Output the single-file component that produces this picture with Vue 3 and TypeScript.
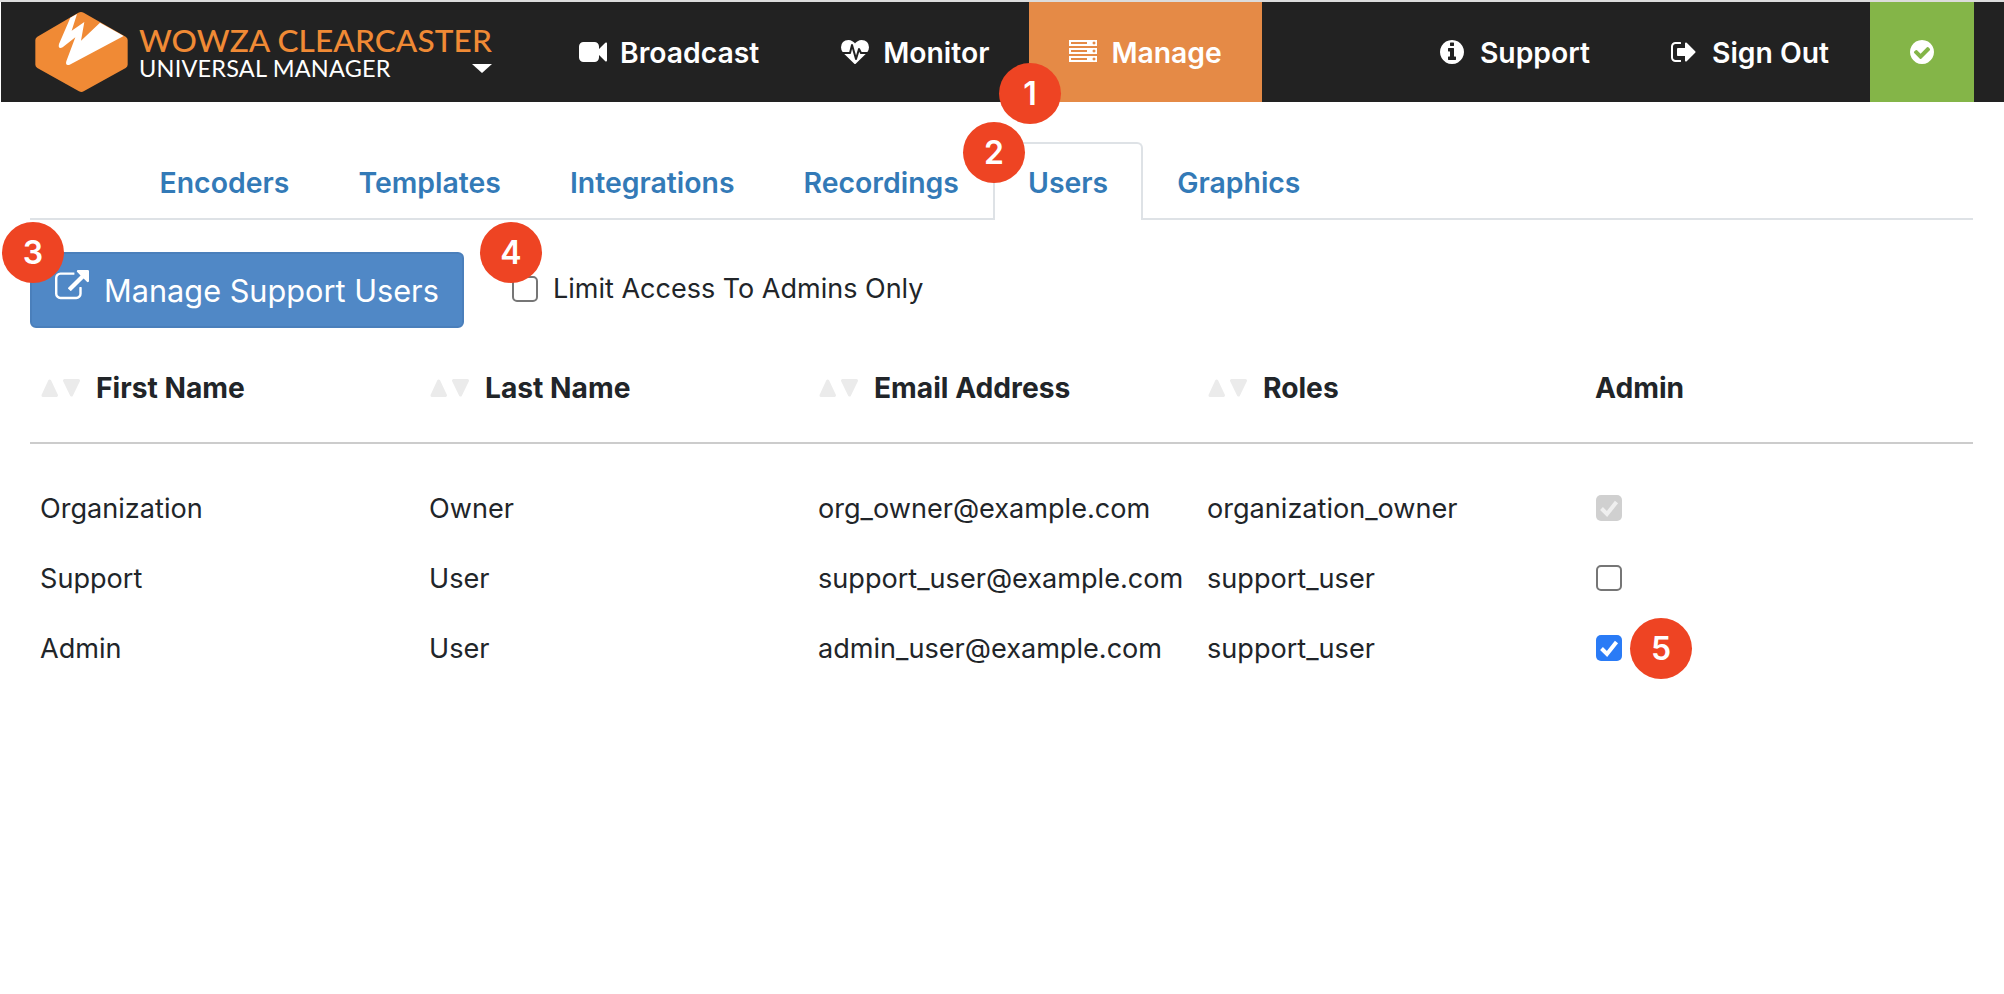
<script setup lang="ts">
interface Row { first: string; last: string; email: string; role: string; state: 'disabled' | 'off' | 'on' }
const tabs = ['Encoders', 'Templates', 'Integrations', 'Recordings', 'Users', 'Graphics']
const cols = ['First Name', 'Last Name', 'Email Address', 'Roles']
const rows: Row[] = [
  { first: 'Organization', last: 'Owner', email: 'org_owner@example.com', role: 'organization_owner', state: 'disabled' },
  { first: 'Support', last: 'User', email: 'support_user@example.com', role: 'support_user', state: 'off' },
  { first: 'Admin', last: 'User', email: 'admin_user@example.com', role: 'support_user', state: 'on' },
]
</script>

<template>
  <div class="page">
    <div class="strip"></div>
    <header class="navbar">
      <div class="brand">
        <svg class="logo" viewBox="0 0 312 264" width="104" height="88">
          <path d="M150 12 Q154 12 158 14 L284 86 Q290 90 290 96 L290 170 Q290 176 284 180 L158 250 Q152 254 144 250 L19 180 Q13 176 13 170 L13 96 Q13 90 19 86 L142 14 Q146 12 150 12 Z" fill="#f08a35"/>
          <path d="M118 29 L138 18 L122 68 L160 42 L150 98 L207 44 L278 84 L116 170 Q102 174 106 160 L133 88 L95 118 Q80 124 84 108 Z" fill="#fff"/>
        </svg>
        <div class="brand-text">
          <div class="brand-top">WOWZA CLEARCASTER</div>
          <div class="brand-bottom">UNIVERSAL MANAGER</div>
        </div>
        <span class="caret"></span>
      </div>
      <a class="item first">
        <svg class="ico" viewBox="0 0 1792 1792"><path d="M1792 352v1088q0 42-39 59-13 5-25 5-27 0-45-19l-403-403v166q0 119-84.500 203.500t-203.500 84.500h-704q-119 0-203.500-84.500t-84.500-203.500v-704q0-119 84.500-203.500t203.500-84.500h704q119 0 203.500 84.500t84.500 203.500v165l403-402q18-19 45-19 12 0 25 5 39 17 39 59z"/></svg>
        Broadcast
      </a>
      <a class="item">
        <svg class="ico" viewBox="0 0 1792 1792"><path d="M1280 1024h305q-5 6-10 10.500t-9 7.500l-3 4-623 600q-18 18-44 18t-44-18l-624-602q-5-2-21-20h369q22 0 39.500-13.500t22.500-34.500l70-281 190 667q6 20 23 33t39 13q21 0 38-13t23-33l146-485 56 112q18 35 57 35zm512-428q0 145-103 300h-369l-111-221q-8-17-25.500-27t-36.500-8q-45 5-56 46l-129 430-196-686q-6-20-23.500-33t-39.500-13-39 13.500-22 34.500l-116 464h-423q-103-155-103-300 0-220 127-344t351-124q62 0 126.500 21.500t120 58 95.500 68.500 76 68q36-36 76-68t95.500-68.500 120-58 126.500-21.500q224 0 351 124t127 344z"/></svg>
        Monitor
      </a>
      <a class="item active">
        <svg class="ico" viewBox="0 0 1792 1792"><path d="M128 1408h1024v-128h-1024v128zm0-512h1024v-128h-1024v128zm1568 448q0-40-28-68t-68-28-68 28-28 68 28 68 68 28 68-28 28-68zm-1568-960h1024v-128h-1024v128zm1568 448q0-40-28-68t-68-28-68 28-28 68 28 68 68 28 68-28 28-68zm0-512q0-40-28-68t-68-28-68 28-28 68 28 68 68 28 68-28 28-68zm96 832v384h-1792v-384h1792zm0-512v384h-1792v-384h1792zm0-512v384h-1792v-384h1792z"/></svg>
        Manage
      </a>
      <a class="item push">
        <svg class="ico" viewBox="0 0 1792 1792"><path d="M1152 1376v-160q0-14-9-23t-23-9h-96v-512q0-14-9-23t-23-9h-320q-14 0-23 9t-9 23v160q0 14 9 23t23 9h96v320h-96q-14 0-23 9t-9 23v160q0 14 9 23t23 9h448q14 0 23-9t9-23zm-128-896v-160q0-14-9-23t-23-9h-192q-14 0-23 9t-9 23v160q0 14 9 23t23 9h192q14 0 23-9t9-23zm640 416q0 209-103 385.500t-279.500 279.500-385.500 103-385.500-103-279.500-279.500-103-385.500 103-385.500 279.500-279.500 385.500-103 385.500 103 279.500 279.500 103 385.500z"/></svg>
        Support
      </a>
      <a class="item">
        <svg class="ico" viewBox="0 0 1792 1792"><path d="M704 1440q0 4 1 20t.5 26.500-3 23.500-10 19.500-20.500 6.500h-320q-119 0-203.500-84.500t-84.500-203.500v-704q0-119 84.500-203.500t203.500-84.500h320q13 0 22.500 9.500t9.500 22.500q0 4 1 20t.5 26.500-3 23.500-10 19.500-20.500 6.500h-320q-66 0-113 47t-47 113v704q0 66 47 113t113 47h312l11.500 1 11.500 3 8 5.500 7 9 2 13.500zm928-544q0 26-19 45l-544 544q-19 19-45 19t-45-19-19-45v-288h-448q-26 0-45-19t-19-45v-384q0-26 19-45t45-19h448v-288q0-26 19-45t45-19 45 19l544 544q19 19 19 45z"/></svg>
        Sign Out
      </a>
      <div class="status">
        <svg class="ico status-ico" viewBox="0 0 1792 1792"><path d="M1412 734q0-28-18-46l-91-90q-19-19-45-19t-45 19l-408 407-226-226q-19-19-45-19t-45 19l-91 90q-18 18-18 46 0 27 18 45l362 362q19 19 45 19 27 0 46-19l543-543q18-18 18-45zm252 162q0 209-103 385.500t-279.500 279.500-385.500 103-385.500-103-279.500-279.500-103-385.500 103-385.500 279.500-279.500 385.500-103 385.500 103 279.500 279.500 103 385.500z"/></svg>
      </div>
    </header>

    <main class="content">
      <nav class="tabs">
        <a v-for="t in tabs" :key="t" class="tab" :class="{ current: t === 'Users' }">{{ t }}</a>
      </nav>

      <div class="toolbar">
        <button class="btn">
          <svg class="btn-ico" viewBox="0 0 1792 1792"><path d="M1408 928v320q0 119-84.500 203.500t-203.500 84.500h-832q-119 0-203.500-84.500t-84.500-203.500v-832q0-119 84.500-203.500t203.500-84.500h704q14 0 23 9t9 23v64q0 14-9 23t-23 9h-704q-66 0-113 47t-47 113v832q0 66 47 113t113 47h832q66 0 113-47t47-113v-320q0-14 9-23t23-9h64q14 0 23 9t9 23zm384-864v512q0 26-19 45t-45 19-45-19l-176-176-652 652q-10 10-23 10t-23-10l-114-114q-10-10-10-23t10-23l652-652-176-176q-19-19-19-45t19-45 45-19h512q26 0 45 19t19 45z"/></svg>
          Manage Support Users
        </button>
        <label class="limit">
          <span class="cb off"></span>
          Limit Access To Admins Only
        </label>
      </div>

      <div class="grid head">
        <div v-for="c in cols" :key="c" class="th">
          <svg class="sort" viewBox="0 0 40 18" width="40" height="18">
            <path d="M8.700 2 L15.500 16.500 L2 16.500 Z"/>
            <path d="M23.500 1.500 L37.500 1.500 L30.500 16 Z"/>
          </svg>{{ c }}
        </div>
        <div class="th admin">Admin</div>
      </div>

      <div class="body">
        <div v-for="r in rows" :key="r.email" class="grid row">
          <div class="td">{{ r.first }}</div>
          <div class="td">{{ r.last }}</div>
          <div class="td">{{ r.email }}</div>
          <div class="td">{{ r.role }}</div>
          <div class="td">
            <span class="cb" :class="r.state">
              <svg v-if="r.state !== 'off'" viewBox="0 0 26 26" width="26" height="26"><path d="M5.500 13.500 L11 19 L20.500 7" fill="none" stroke-width="4"/></svg>
            </span>
          </div>
        </div>
      </div>
    </main>

    <span class="badge b1">1</span>
    <span class="badge b2">2</span>
    <span class="badge b3">3</span>
    <span class="badge b4">4</span>
    <span class="badge b5">5</span>
  </div>
</template>

<style>
html, body { margin: 0; background: #fff; }
</style>

<style scoped>
.page { position: relative; width: 2004px; height: 994px; overflow: hidden; font-family: Inter, "Liberation Sans", sans-serif; color: #212529; background: #fff; }
.strip { height: 2px; background: #dcdcdc; }
.navbar { height: 100px; background: #222; display: flex; align-items: stretch; padding-right: 30px; margin-left: 1px; color: #fff; }
.brand { width: 538px; flex: none; position: relative; display: flex; align-items: center; }
.logo { margin-left: 30px; flex: none; }
.brand-text { margin-left: 4px; font-family: Lato, sans-serif; }
.brand-top { color: #f08a35; font-size: 31.600px; line-height: 31px; font-weight: 500; letter-spacing: 0.1px; white-space: nowrap; }
.brand-bottom { font-size: 23.500px; line-height: 24px; letter-spacing: 0.2px; white-space: nowrap; }
.caret { position: absolute; left: 471px; top: 62px; border-left: 10px solid transparent; border-right: 10px solid transparent; border-top: 9px solid #fff; }
.item { display: flex; align-items: center; gap: 14px; padding: 2px 40px 0; font-size: 28.300px; font-weight: 600; white-space: nowrap; }
.item.first { gap: 13px; padding-right: 42px; }
.item.active { background: #e58a46; }
.item.push { margin-left: auto; }
.ico { width: 28px; height: 28px; fill: #fff; flex: none; margin-top: -2px; }
.status { width: 104px; background: #84b548; display: flex; align-items: center; justify-content: center; margin-left: 1px; }
.status-ico { width: 28px; height: 28px; margin-top: 0; }

.content { padding: 40px 31px 0 30px; }
.tabs { display: flex; padding-left: 95px; border-bottom: 2px solid #dee2e6; height: 78px; box-sizing: border-box; }
.tab { padding: 0 32.550px; height: 78px; box-sizing: border-box; display: flex; align-items: center; font-size: 28.400px; font-weight: 600; color: #337ab7; border: 2px solid transparent; border-bottom: 0; }
.tab.current { background: #fff; border-color: #dee2e6; border-radius: 6px 6px 0 0; }

.toolbar { display: flex; margin-top: 32px; }
.btn { width: 434px; height: 76px; box-sizing: border-box; display: flex; align-items: center; gap: 15px; padding: 0 0 0 23px; background: #5088c6; border: 2px solid #4a7fbb; border-radius: 6px; color: #fff; font: 400 30.700px Inter, sans-serif; white-space: nowrap; }
.btn-ico { width: 34px; height: 34px; fill: #fff; flex: none; margin-top: -6px; }
.limit { margin-left: 48px; margin-top: 24px; display: flex; align-items: center; height: 26px; gap: 15px; font-size: 27px; white-space: nowrap; line-height: 24px; }

.grid { display: grid; grid-template-columns: repeat(5, 389px); }
.head { height: 116px; padding-top: 6px; align-items: center; border-bottom: 2px solid #ccc; box-sizing: border-box; }
.th { padding-left: 10px; font-size: 28.200px; font-weight: 700; display: flex; align-items: center; }
.th.admin { margin-left: -1px; }
.sort { flex: none; margin: 0 15px 0 1px; fill: #ebebeb; stroke: #ebebeb; stroke-width: 3; stroke-linejoin: round; }
.body { padding-top: 29px; }
.row { height: 70px; align-items: center; }
.td { padding-left: 10px; font-size: 27.100px; white-space: nowrap; }

.cb { display: block; width: 26px; height: 26px; box-sizing: border-box; border-radius: 5px; flex: none; position: relative; }
.cb.off { border: 2px solid #767676; background: #fff; }
.cb.on { background: #2a7bf6; }
.cb.on svg { stroke: #fff; }
.cb.disabled { background: #d0d0d0; }
.cb.disabled svg { stroke: #efefef; }
.cb svg { display: block; }

.badge { position: absolute; width: 62px; height: 61px; border-radius: 50%; background: #ee4423; color: #fff; font-size: 32px; font-weight: 600; display: flex; align-items: center; justify-content: center; }
.b1 { left: 999px; top: 63px; }
.b2 { left: 963px; top: 122px; }
.b3 { left: 2px; top: 222px; }
.b4 { left: 480px; top: 222px; }
.b5 { left: 1630px; top: 618px; }
</style>
